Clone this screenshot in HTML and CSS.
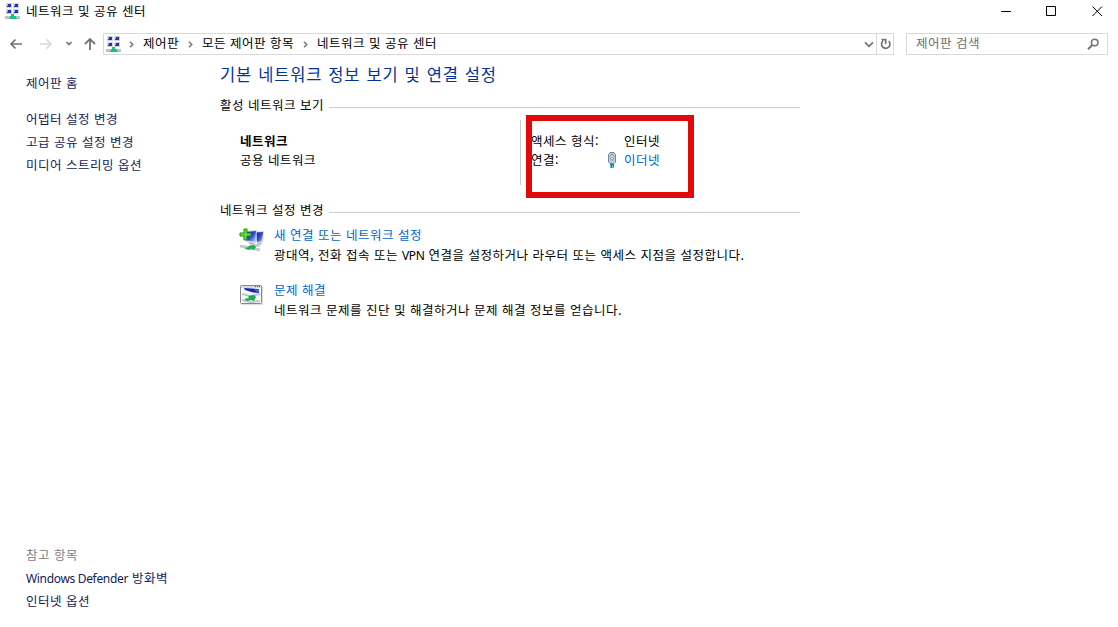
FILE: index.html
```html
<!DOCTYPE html>
<html lang="ko">
<head>
<meta charset="utf-8">
<title>네트워크 및 공유 센터</title>
<link rel="stylesheet" href="styles.css">
</head>
<body>
<svg class="defs" width="0" height="0">
  <symbol id="net" viewBox="0 0 16 17">
    <path fill="#d3d5dc" d="M1 0h6v5H1zM8 0h6v5H8zM1 6h6v5H1zM8 6h6v5H8z"/>
    <path fill="#2431b5" d="M2 1h4v3H2zM9 1h4v3H9zM2 7h4v3H2zM9 7h4v3H9z"/>
    <path fill="#a5b2f5" d="M2 1h1v2H2zM9 1h1v2H9zM2 7h1v2H2zM9 7h1v2H9z"/>
    <path fill="#bfc1c5" d="M0 13h15v3H0z"/>
    <path fill="#15c57b" d="M6 11h3v2h2v2h1v1H4v-1h1v-2h1z"/>
  </symbol>
  <symbol id="chev" viewBox="0 0 5 7"><path d="M1 .7 3.8 3.5 1 6.3" fill="none" stroke="#777" stroke-width="1.5"/></symbol>
</svg>
<div class="window">
  <header class="titlebar">
    <svg class="net-icon" width="16" height="17"><use href="#net"/></svg>
    <span class="title">네트워크 및 공유 센터</span>
    <svg class="controls" width="104" height="12" viewBox="0 0 104 12">
      <path d="M1 6.5h10M46.5 1.500h9v9h-9zM92.500 1.500l9.500 9.500M102 1.500l-9.500 9.500" fill="none" stroke="#000"/>
    </svg>
  </header>
  <nav class="navbar">
    <svg class="arrows" width="88" height="14" viewBox="0 0 88 14" fill="none">
      <path d="M13 7H2M6.500 2.500 2 7l4.500 4.500" stroke="#747474" stroke-width="1.700"/>
      <path d="M31 7h11M37.500 2.500 42 7l-4.500 4.500" stroke="#dadada" stroke-width="1.700"/>
      <path d="M57.500 5 60 7.500l2.500-2.500" stroke="#777" stroke-width="1.700"/>
      <path d="M81 13V2M76 7l5-5 5 5" stroke="#747474" stroke-width="1.800"/>
    </svg>
    <div class="address">
      <svg class="net-icon" width="16" height="17"><use href="#net"/></svg>
      <svg class="chev c1" width="5" height="7"><use href="#chev"/></svg>
      <span>제어판</span>
      <svg class="chev" width="5" height="7"><use href="#chev"/></svg>
      <span>모든 제어판 항목</span>
      <svg class="chev" width="5" height="7"><use href="#chev"/></svg>
      <span>네트워크 및 공유 센터</span>
      <svg class="drop" width="10" height="7" viewBox="0 0 10 7"><path d="M1 1.300 5 5.300l4-4" fill="none" stroke="#777" stroke-width="1.800"/></svg>
      <div class="refresh">
        <svg width="12" height="14" viewBox="0 0 12 14" fill="none" stroke="#747474" stroke-width="1.700"><path d="M9.700 4.200A4.200 4.200 0 1 1 4.100 3.900M2.500 2.700h4.200v4.300"/></svg>
      </div>
    </div>
    <div class="search">
      <span>제어판 검색</span>
      <svg width="13" height="12" viewBox="0 0 13 12" fill="none" stroke="#747474"><circle cx="7.700" cy="4.500" r="3.300" stroke-width="1.600"/><path d="M5.300 7 1 11.200" stroke-width="2"/></svg>
    </div>
  </nav>
  <div class="content">
    <aside class="sidebar">
      <a class="home">제어판 홈</a>
      <a>어댑터 설정 변경</a>
      <a>고급 공유 설정 변경</a>
      <a>미디어 스트리밍 옵션</a>
      <div class="related">
        <span class="muted">참고 항목</span>
        <a><span class="latin">Windows Defender</span> 방화벽</a>
        <a>인터넷 옵션</a>
      </div>
    </aside>
    <main class="main">
      <h1>기본 네트워크 정보 보기 및 연결 설정</h1>
      <h2>활성 네트워크 보기</h2>
      <section class="active">
        <div class="network">
          <b>네트워크</b>
          <span>공용 네트워크</span>
        </div>
        <div class="details">
          <span>액세스 형식:</span><i></i><span>인터넷</span>
          <span>연결:</span>
          <svg width="8" height="16" viewBox="0 0 8 16">
            <path d="M2 .5h4l1.500 2v7.500l-1.500 1.500H2L.5 10V2.500z" fill="#c3cdda" stroke="#74869c"/>
            <path d="M3 2.500h2V8H3z" fill="#f1f5fa" stroke="#798797" stroke-width=".8"/>
            <path d="M2 12h4v4H2z" fill="#5fc3df"/><path d="M2 12h4v1H2zM3 13h1v3H3zM5 13h1v2H5z" fill="#1685a8"/>
          </svg>
          <a>이더넷</a>
          <div class="highlight"></div>
        </div>
      </section>
      <h2>네트워크 설정 변경</h2>
      <section class="task">
        <svg width="26" height="26" viewBox="0 0 26 26">
          <defs><linearGradient id="scr" x2="1" y2="1"><stop stop-color="#0716a4"/><stop offset=".55" stop-color="#334ed2"/><stop offset="1" stop-color="#c6d5ff"/></linearGradient></defs>
          <path d="M15 3.500 25 3l-1 11-6 1z" fill="#d5d9e6"/><path d="M17 4.500 24 4l-1 9-5 1z" fill="url(#scr)"/>
          <path d="m6 3 12-1-1 13-10-1z" fill="#cfd3df"/><path d="m7 4 10-1-1 10.500-8-1z" fill="url(#scr)"/>
          <path d="m10 14 5 1 1 2-6-1zM18 15l4-1 1 2-3 1z" fill="#b5b9c2"/>
          <path d="m1 18 6 1 14 3M11 18l10-1" stroke="#c6cacd" stroke-width="3"/>
          <path d="m5 20 5-1-1-1 6-1 2 2-2 3-2-1-4 1z" fill="#20ae55"/>
          <path d="M5 1h3v4h4v3H8v4H5V8H1V5h4z" fill="#65d83c" stroke="#218b18"/>
        </svg>
        <div><a>새 연결 또는 네트워크 설정</a><p>광대역, 전화 접속 또는 <span class="latin">VPN</span> 연결을 설정하거나 라우터 또는 액세스 지점을 설정합니다.</p></div>
      </section>
      <section class="task">
        <svg width="26" height="26" viewBox="0 0 26 26">
          <path d="M2 4h22v18H2z" fill="#ccc" opacity=".6"/>
          <rect x="1.500" y="2.500" width="21" height="18" rx="1" fill="#f8f9fa" stroke="#85898d"/>
          <path d="M2 3h20v2H2z" fill="#d8dce2"/><path d="M16 3.500h1m1 0h1m1 0h1" stroke="#4b5666"/>
          <path d="m5 5 15 1v4l-6-.5-8-2.500z" fill="#1826ab"/><path d="m15 6 5 .5v3l-3-1z" fill="#4b65d6"/>
          <path d="m3 11 8 2 10-2M3 17l8 2 10-1" stroke="#c4c8cc" stroke-width="2" fill="none"/>
          <path d="m5 16 5-1-1-2 6-1 2 2-2 4-3-1-4 1z" fill="#1baa50"/>
        </svg>
        <div><a>문제 해결</a><p>네트워크 문제를 진단 및 해결하거나 문제 해결 정보를 얻습니다.</p></div>
      </section>
    </main>
  </div>
</div>
</body>
</html>
```
FILE: styles.css
```css
* { box-sizing: border-box; }
body {
  margin: 0;
  background: #fff;
  color: #000;
  font: 12.500px/20px "Noto Sans CJK KR", "Noto Sans", sans-serif;
  letter-spacing: .5px;
  word-spacing: 0;
  white-space: nowrap;
}
svg { display: block; flex: none; }
.defs { position: absolute; }
.latin { font-family: "Noto Sans", sans-serif; font-size: 12px; letter-spacing: -.33px; }
.window { display: flex; flex-direction: column; width: 1118px; height: 627px; overflow: hidden; }
.titlebar { display: flex; align-items: center; height: 33px; padding: 0 14px 10px 5px; }
.title { margin-left: 5px; padding-bottom: 2px; }
.controls { margin: 0 0 2px auto; }
.navbar { display: flex; align-items: center; height: 22px; padding-left: 9px; }
.address { display: flex; align-items: center; width: 791px; height: 22px; margin-left: 6px; padding-left: 2px; border: 1px solid #d9d9d9; }
.address span, .search span { padding-bottom: 2px; }
.chev { margin: 0 9px; }
.c1 { margin: 0 9px 0 7px; }
.drop { margin-left: auto; margin-right: 2px; }
.refresh { display: flex; align-items: center; justify-content: center; width: 17px; height: 20px; border-left: 1px solid #d9d9d9; }
.search { display: flex; align-items: center; justify-content: space-between; width: 202px; height: 22px; margin-left: 12px; padding: 0 7px 0 9px; border: 1px solid #d9d9d9; color: #6d6d6d; }
.content { display: flex; flex: 1; }
.sidebar { display: flex; flex-direction: column; width: 220px; padding: 16px 0 16px 26px; line-height: 23px; color: #151c55; }
.home { margin-bottom: 13px; }
.related { display: grid; grid-template-rows: 23px 23px 22px; margin-top: auto; }
.muted { color: #808080; }
.main { width: 580px; padding-top: 7px; }
h1 { margin: 0; color: #003399; font-size: 16.500px; font-weight: 400; line-height: 24px; letter-spacing: .82px; word-spacing: .7px; }
h2 { display: flex; align-items: center; gap: 5px; margin: 9px 0 0; font-size: inherit; font-weight: 400; line-height: 20px; }
h2::after { content: ""; flex: 1; height: 1px; margin-top: 4px; background: #ccc; }
.active { display: flex; height: 65px; margin: 5px 0 15px; line-height: 19px; }
.network { display: flex; flex-direction: column; width: 301px; padding: 11px 0 0 20px; border-right: 1px solid #ccc; }
.details { position: relative; display: grid; grid-template-columns: 77px 16px auto; grid-auto-rows: 19px; padding: 11px 0 0 10px; }
.details svg { margin-top: 2px; }
.details a, .task a { color: #0066cc; }
.highlight { position: absolute; left: 5px; top: -5px; width: 168px; height: 83px; border: 6px solid #e10909; }
.task { display: flex; gap: 9px; margin-top: 5px; padding-left: 19px; height: 50px; }
.task svg { margin-top: 3px; }
.task p { margin: 0; }
```
